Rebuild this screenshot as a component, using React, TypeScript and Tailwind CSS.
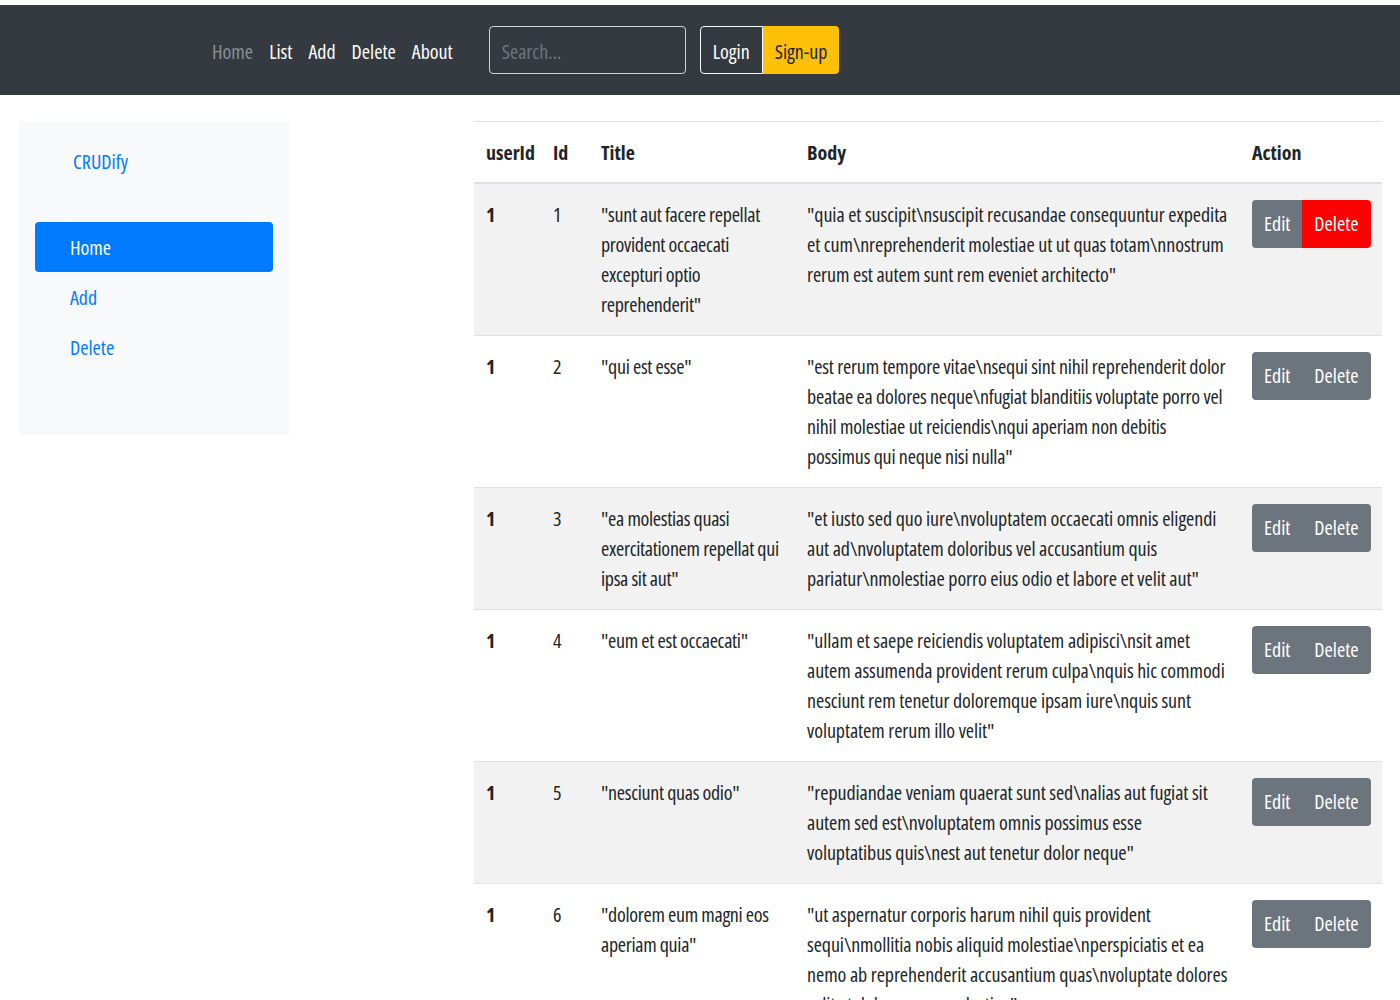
import React from 'react';

interface Post {
  userId: number;
  id: number;
  title: string;
  body: string;
}

const posts: Post[] = [
  {
    userId: 1,
    id: 1,
    title: '"sunt aut facere repellat provident occaecati excepturi optio reprehenderit"',
    body: '"quia et suscipit\\nsuscipit recusandae consequuntur expedita et cum\\nreprehenderit molestiae ut ut quas totam\\nnostrum rerum est autem sunt rem eveniet architecto"',
  },
  {
    userId: 1,
    id: 2,
    title: '"qui est esse"',
    body: '"est rerum tempore vitae\\nsequi sint nihil reprehenderit dolor beatae ea dolores neque\\nfugiat blanditiis voluptate porro vel nihil molestiae ut reiciendis\\nqui aperiam non debitis possimus qui neque nisi nulla"',
  },
  {
    userId: 1,
    id: 3,
    title: '"ea molestias quasi exercitationem repellat qui ipsa sit aut"',
    body: '"et iusto sed quo iure\\nvoluptatem occaecati omnis eligendi aut ad\\nvoluptatem doloribus vel accusantium quis pariatur\\nmolestiae porro eius odio et labore et velit aut"',
  },
  {
    userId: 1,
    id: 4,
    title: '"eum et est occaecati"',
    body: '"ullam et saepe reiciendis voluptatem adipisci\\nsit amet autem assumenda provident rerum culpa\\nquis hic commodi nesciunt rem tenetur doloremque ipsam iure\\nquis sunt voluptatem rerum illo velit"',
  },
  {
    userId: 1,
    id: 5,
    title: '"nesciunt quas odio"',
    body: '"repudiandae veniam quaerat sunt sed\\nalias aut fugiat sit autem sed est\\nvoluptatem omnis possimus esse voluptatibus quis\\nest aut tenetur dolor neque"',
  },
  {
    userId: 1,
    id: 6,
    title: '"dolorem eum magni eos aperiam quia"',
    body: '"ut aspernatur corporis harum nihil quis provident sequi\\nmollitia nobis aliquid molestiae\\nperspiciatis et ea nemo ab reprehenderit accusantium quas\\nvoluptate dolores velit et doloremque molestiae"',
  },
];

function Navbar() {
  return (
    <nav className="mt-[5px] h-[90px] bg-[#343a40] flex items-center">
      <ul className="flex items-center gap-[16px] ml-[212px] pt-[3px]">
        <li className="text-[#8b8f93]">Home</li>
        <li className="text-white">List</li>
        <li className="text-white">Add</li>
        <li className="text-white">Delete</li>
        <li className="text-white">About</li>
      </ul>
      <input
        className="ml-[36px] w-[197px] h-12 px-3 pt-[3px] rounded border border-[#ced4da] bg-transparent text-white placeholder:text-[#6c757d] outline-none"
        placeholder="Search..."
      />
      <div className="ml-[14px] flex">
        <button className="h-12 px-3 pt-[3px] rounded-l border border-[#f8f9fa] text-white">Login</button>
        <button className="h-12 px-3 pt-[3px] rounded-r bg-[#ffc107] text-[#212529]">Sign-up</button>
      </div>
    </nav>
  );
}

function Sidebar() {
  return (
    <aside className="w-[270px] h-[314px] bg-[#f8f9fa] px-4 pt-[26px]">
      <div className="pl-[38px] text-[#007bff] leading-[30px]">CRUDify</div>
      <ul className="mt-[45px]">
        <li className="h-[50px] pl-[35px] pt-[2px] flex items-center rounded bg-[#007bff] text-white">Home</li>
        <li className="h-[50px] pl-[35px] pt-[2px] flex items-center text-[#007bff]">Add</li>
        <li className="h-[50px] pl-[35px] pt-[2px] flex items-center text-[#007bff]">Delete</li>
      </ul>
    </aside>
  );
}

export default function App() {
  return (
    <div
      className="min-h-screen bg-white text-[20px] leading-[30px] text-[#212529] font-stretch-condensed"
      style={{ fontFamily: '"Open Sans", "Liberation Sans", sans-serif' }}
    >
      <Navbar />
      <div className="flex pt-[26px]">
        <div className="ml-[19px]">
          <Sidebar />
        </div>
        <div className="ml-[185px] w-[908px]">
          <table className="w-full table-fixed border-collapse">
            <colgroup>
              <col className="w-[67px]" />
              <col className="w-[48px]" />
              <col className="w-[206px]" />
              <col className="w-[445px]" />
              <col className="w-[142px]" />
            </colgroup>
            <thead>
              <tr className="border-t border-[#dee2e6] border-b-2">
                <th className="px-3 pt-4 pb-[14px] text-left font-bold align-bottom">userId</th>
                <th className="px-3 pt-4 pb-[14px] text-left font-bold align-bottom">Id</th>
                <th className="px-3 pt-4 pb-[14px] text-left font-bold align-bottom">Title</th>
                <th className="px-3 pt-4 pb-[14px] text-left font-bold align-bottom">Body</th>
                <th className="px-3 pt-4 pb-[14px] text-left font-bold align-bottom">Action</th>
              </tr>
            </thead>
            <tbody>
              {posts.map((p, i) => (
                <tr key={p.id} className={`border-t border-[#dee2e6] ${i % 2 === 0 ? 'bg-[#f2f2f2]' : 'bg-white'}`}>
                  <td className="px-3 pt-4 pb-[15px] align-top font-bold">{p.userId}</td>
                  <td className="px-3 pt-4 pb-[15px] align-top">{p.id}</td>
                  <td className="px-3 pt-4 pb-[15px] align-top tracking-[-0.3px]">{p.title}</td>
                  <td
                    className={`px-3 pt-4 pb-[15px] align-top ${i === 1 ? 'tracking-[-0.2px]' : 'tracking-[-0.08px]'}`}
                  >
                    {p.body}
                  </td>
                  <td className="px-3 pt-4 pb-[15px] align-top">
                    <div className="flex">
                      <button className="h-12 px-3 rounded-l bg-[#6c757d] text-white">Edit</button>
                      <button
                        className={`h-12 px-3 rounded-r text-white ${i === 0 ? 'bg-[#ff0000]' : 'bg-[#6c757d]'}`}
                      >
                        Delete
                      </button>
                    </div>
                  </td>
                </tr>
              ))}
            </tbody>
          </table>
        </div>
      </div>
    </div>
  );
}
